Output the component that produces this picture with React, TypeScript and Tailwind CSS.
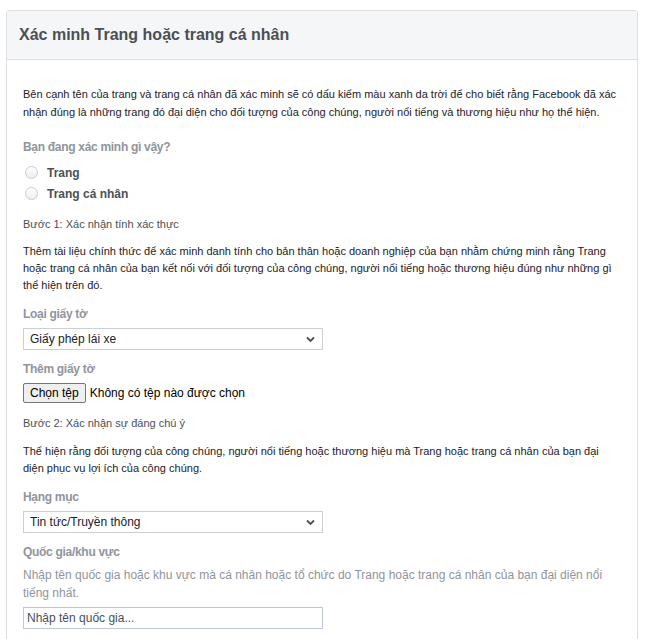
import { useState } from "react";

function Radio({ label }: { label: string }) {
  return (
    <label className="flex h-[21px] items-center">
      <span className="ml-[2px] mr-[9px] h-[13px] w-[13px] rounded-full border border-[#c8ccd2] bg-gradient-to-b from-white to-[#eceef1]" />
      <span className="text-[12px] font-bold leading-[18px] text-[#4b4f56]">{label}</span>
    </label>
  );
}

function Label({ children, className = "" }: { children: string; className?: string }) {
  return (
    <div className={`text-[12px] font-bold leading-[18px] tracking-[-0.3px] text-[#90949c] ${className}`}>{children}</div>
  );
}

function Chevron() {
  return (
    <svg className="pointer-events-none absolute right-[8px] top-[8px]" width="9" height="7" viewBox="0 0 9 7">
      <path d="M1 1.5l3.5 3.5 3.5-3.5" fill="none" stroke="#4b4f56" strokeWidth="1.8" />
    </svg>
  );
}

function SelectBox({ value, options }: { value: string; options: string[] }) {
  const [current, setCurrent] = useState(value);
  return (
    <div className="relative mt-[5px] w-[300px]">
      <select
        value={current}
        onChange={(e) => setCurrent(e.target.value)}
        className="block h-[22px] w-full appearance-none rounded-none border border-[#ccd0d5] bg-white pl-[6px] text-[12px] leading-[20px] text-[#1d2129] outline-none"
      >
        {options.map((o) => (
          <option key={o}>{o}</option>
        ))}
      </select>
      <Chevron />
    </div>
  );
}

export default function App() {
  return (
    <div className="min-h-[639px] bg-white pt-[10px] font-['Liberation_Sans',Arial,sans-serif]">
      <div className="ml-[6px] w-[632px] rounded-t-[3px] border border-[#dddfe2] bg-white">
        {/* Header */}
        <div className="flex h-[49px] items-center border-b border-[#dddfe2] bg-[#f5f6f7] px-[12px]">
          <h1 className="text-[16px] font-bold text-[#4b4f56]">Xác minh Trang hoặc trang cá nhân</h1>
        </div>

        {/* Body */}
        <div className="px-[16px] pb-[12px] pt-[25px] text-[11px] text-[#1d2129]">
          <p className="leading-[18px]">
            Bên cạnh tên của trang và trang cá nhân đã xác minh sẽ có dấu kiểm màu xanh da trời để cho biết rằng Facebook đã xác nhận đúng là những trang đó đại diện cho đối tượng của công chúng, người nổi tiếng và thương hiệu như họ thể hiện.
          </p>

          <Label className="mt-[17px]">Bạn đang xác minh gì vậy?</Label>
          <div className="mt-[6px]">
            <Radio label="Trang" />
            <Radio label="Trang cá nhân" />
          </div>

          <div className="mt-[11px] leading-[18px] text-[#4b4f56]">Bước 1: Xác nhận tính xác thực</div>
          <p className="mt-[10px] leading-[17px]">
            Thêm tài liệu chính thức để xác minh danh tính cho bản thân hoặc doanh nghiệp của bạn nhằm chứng minh rằng Trang hoặc trang cá nhân của bạn kết nối với đối tượng của công chúng, người nổi tiếng hoặc thương hiệu đúng như những gì thể hiện trên đó.
          </p>

          <Label className="mt-[11px]">Loại giấy tờ</Label>
          <SelectBox value="Giấy phép lái xe" options={["Giấy phép lái xe", "Hộ chiếu", "Chứng minh nhân dân"]} />

          <Label className="mt-[10px]">Thêm giấy tờ</Label>
          <div className="mt-[5px] flex h-[20px] items-center text-[12px] text-black">
            <button className="h-[20px] rounded-[2px] border border-[#767676] bg-[#efefef] px-[6px] leading-[18px]">Chọn tệp</button>
            <span className="ml-[4px]">Không có tệp nào được chọn</span>
          </div>

          <div className="mt-[11px] leading-[18px] text-[#4b4f56]">Bước 2: Xác nhận sự đáng chú ý</div>
          <p className="mt-[11px] leading-[17px]">
            Thể hiện rằng đối tượng của công chúng, người nổi tiếng hoặc thương hiệu mà Trang hoặc trang cá nhân của bạn đại diện phục vụ lợi ích của công chúng.
          </p>

          <Label className="mt-[11px]">Hạng mục</Label>
          <SelectBox value="Tin tức/Truyền thông" options={["Tin tức/Truyền thông", "Thể thao", "Giải trí"]} />

          <Label className="mt-[10px]">Quốc gia/khu vực</Label>
          <p className="mt-[5px] text-[12px] leading-[18px] text-[#90949c]">
            Nhập tên quốc gia hoặc khu vực mà cá nhân hoặc tổ chức do Trang hoặc trang cá nhân của bạn đại diện nổi tiếng nhất.
          </p>
          <input
            placeholder="Nhập tên quốc gia..."
            className="mt-[5px] block h-[22px] w-[300px] border border-[#bdc7d8] px-[3px] text-[12px] text-[#1d2129] outline-none placeholder:text-[#4b4f56]"
          />
        </div>
      </div>
    </div>
  );
}
